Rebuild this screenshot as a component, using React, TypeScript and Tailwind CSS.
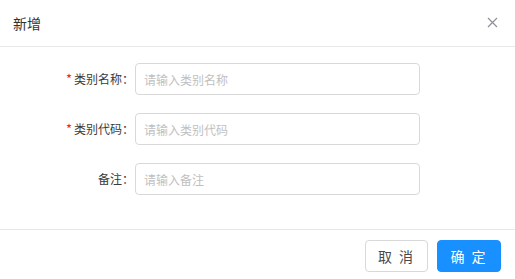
import React from "react"

const font = { fontFamily: '"Noto Sans CJK SC", "Noto Sans", sans-serif' }

function Row({
  label,
  placeholder,
  required,
}: {
  label: string
  placeholder: string
  required?: boolean
}) {
  return (
    <div className="mb-[18px] flex items-center last:mb-0">
      <label className="flex w-[135px] items-center justify-end pr-[1px] text-[12px] leading-[32px] text-[#3a3a3a]">
        {required && <span className="mr-[2px] text-[13px] text-[#f5222d]">*</span>}
        {label}：
      </label>
      <input
        placeholder={placeholder}
        className="h-[32px] w-[285px] rounded-[4px] border border-[#d9d9d9] bg-white px-[8px] text-[12px] text-[#606266] outline-none placeholder:text-[#bfbfbf]"
      />
    </div>
  )
}

export default function App() {
  return (
    <div className="h-[279px] w-[515px] bg-white" style={font}>
      <div className="flex h-[47px] items-center justify-between border-b border-[#e8e8e8] pl-[13px] pr-[17px]">
        <span className="text-[14px] text-[#333333]">新增</span>
        <svg width="11" height="11" viewBox="0 0 11 11" className="mb-[1px]">
          <path
            d="M1 1L10 10M10 1L1 10"
            stroke="#909399"
            strokeWidth="1.3"
            fill="none"
          />
        </svg>
      </div>
      <div className="border-b border-[#e8e8e8] pt-[16px] pb-[34px]">
        <Row label="类别名称" placeholder="请输入类别名称" required />
        <Row label="类别代码" placeholder="请输入类别代码" required />
        <Row label="备注" placeholder="请输入备注" />
      </div>
      <div className="flex justify-end gap-[9px] pt-[10px] pr-[14px]">
        <button className="h-[32px] w-[63px] rounded-[4px] border border-[#d9d9d9] bg-white text-[14px] tracking-[2px] text-[#4a4a4a]">
          取 消
        </button>
        <button className="h-[32px] w-[64px] rounded-[4px] border border-[#1890ff] bg-[#1890ff] text-[14px] tracking-[2px] text-white">
          确 定
        </button>
      </div>
    </div>
  )
}
